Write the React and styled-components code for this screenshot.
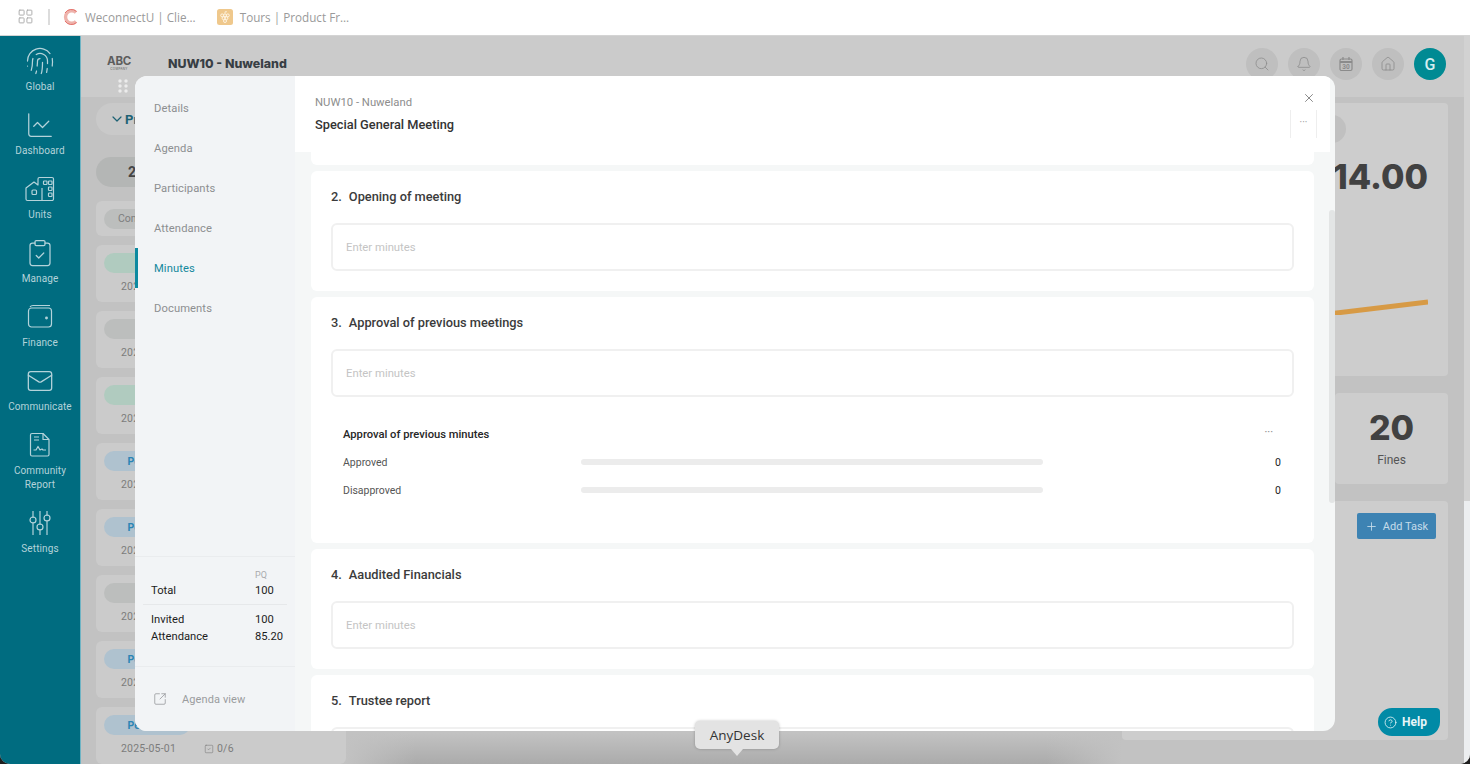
import React from 'react';
import styled, { createGlobalStyle } from 'styled-components';
import {
  Fingerprint, ChartLine, ClipboardCheck, Mail, X, Search, Bell, House,
  SquareArrowOutUpRight, Plus, CircleHelp, ChevronDown, LayoutGrid, SquareCheck,
} from 'lucide-react';

const GlobalStyle = createGlobalStyle`
  html, body { margin: 0; padding: 0; height: 100%; background: #1f1f1f; overflow: hidden; }
  body { font-family: Roboto, "Liberation Sans", sans-serif; }
  * { box-sizing: border-box; }
`;

const Page = styled.div`
  position: relative;
  width: 1470px;
  height: 764px;
  display: flex;
  flex-direction: column;
  overflow: hidden;
`;

/* browser bookmarks bar */
const TopBar = styled.div`
  height: 36px;
  flex: none;
  background: #fff;
  border-bottom: 1px solid #d4d4d4;
  display: flex;
  align-items: center;
  padding: 0 0 2px 17px;
  color: #9a9a9a;
  font-family: "Open Sans", sans-serif;
  font-size: 11.7px;
`;

const Divider = styled.span`
  width: 2px;
  height: 16px;
  background: #dcdcdc;
  margin: 0 13px 0 14px;
`;

const Tab = styled.div`
  display: flex;
  align-items: center;
  gap: 7px;
  margin-right: 21px;
  white-space: nowrap;
`;

const Window = styled.div`
  flex: 1;
  display: flex;
  min-height: 0;
  border-radius: 0 0 10px 10px;
  overflow: hidden;
  background: #c2c2c2;
`;

const Sidebar = styled.nav`
  width: 81px;
  flex: none;
  background: #006c80;
  border-right: 1px solid #6fb4c4;
  display: flex;
  flex-direction: column;
  padding-top: 10px;
`;

const SideItem = styled.div`
  height: ${(p) => (p.$tall ? '78px' : '64px')};
  display: flex;
  flex-direction: column;
  align-items: center;
  color: #b4d3da;
  font-size: 10px;
  line-height: 14px;
  text-align: center;
  letter-spacing: 0.1px;
`;

const IconSlot = styled.div`
  height: 30px;
  flex: none;
  margin-bottom: 4px;
  display: flex;
  align-items: center;
`;

const Main = styled.main`
  flex: 1;
  min-width: 0;
  display: flex;
  flex-direction: column;
`;

const Header = styled.header`
  height: 61px;
  flex: none;
  background: #cbcbcb;
  display: flex;
  align-items: center;
  padding: 0 18px 7px 26px;
`;

const Logo = styled.div`
  width: 24px;
  margin-right: 37px;
  color: #5d5d5d;
  font-family: Inter, sans-serif;
  font-weight: 700;
  font-size: 11.5px;
  line-height: 11px;
  letter-spacing: -0.3px;
  text-align: center;

  small {
    display: block;
    font-size: 3px;
    line-height: 4px;
    letter-spacing: 0.3px;
    font-weight: 400;
  }
`;

const OrgName = styled.div`
  flex: 1;
  font-family: Inter, sans-serif;
  font-weight: 800;
  font-size: 12.4px;
  color: #383e44;
`;

const HeaderButtons = styled.div`
  display: flex;
  gap: 10px;
  margin-top: 2px;
`;

const RoundButton = styled.div`
  width: 32px;
  height: 32px;
  border-radius: 50%;
  background: ${(p) => (p.$active ? '#008a93' : '#bfbfbf')};
  color: ${(p) => (p.$active ? '#d5eef0' : '#8b8b8b')};
  display: flex;
  align-items: center;
  justify-content: center;
  font-size: 16px;
  font-weight: 500;
`;

const Content = styled.div`
  flex: 1;
  min-height: 0;
  display: flex;
  padding: 6px 16px 0 15px;
  background: #c2c2c2;
`;

const LeftColumn = styled.div`
  width: 250px;
  flex: none;
  display: flex;
  flex-direction: column;
  gap: 9px;
`;

const CollapseBar = styled.div`
  height: 32px;
  border-radius: 16px;
  background: #c9c9c9;
  display: flex;
  align-items: center;
  padding-left: 13px;
  margin-bottom: 13px;
  color: #1d6274;
  font-size: 13px;
  font-weight: 700;
`;

const YearPill = styled.div`
  height: 30px;
  border-radius: 15px;
  background: #b4b6b5;
  color: #444;
  font-weight: 700;
  font-size: 14px;
  display: flex;
  align-items: center;
  padding-left: 32px;
  margin-bottom: 5px;
`;

const FilterCard = styled.div`
  height: 35px;
  border-radius: 6px;
  background: #cbcbcb;
  display: flex;
  align-items: center;
  padding-left: 8px;
`;

const StatusPill = styled.div`
  width: 86px;
  height: 20px;
  border-radius: 10px;
  background: ${(p) => p.$bg};
  color: ${(p) => p.$color};
  font-size: 10.5px;
  font-weight: 700;
  display: flex;
  align-items: center;
  justify-content: center;
`;

const FilterPill = styled.div`
  width: 70px;
  height: 20px;
  border-radius: 10px;
  background: #bcbebd;
  color: #7d7d7d;
  font-size: 10.5px;
  display: flex;
  align-items: center;
  padding-left: 14px;
`;

const MeetingCard = styled.div`
  height: 57px;
  flex: none;
  border-radius: 6px;
  background: #cbcbcb;
  padding: 8px 8px 0;
`;

const MeetingMeta = styled.div`
  display: flex;
  align-items: center;
  gap: 3px;
  margin: 7px 0 0 17px;
  color: #7c7c7c;
  font-size: 10.5px;
  letter-spacing: 0.2px;

  span:first-child { margin-right: 25px; }
`;

const CenterColumn = styled.div`
  flex: 1;
  min-width: 0;
  margin-bottom: -1px;
  background:
    linear-gradient(to right, #c2c2c2 0, rgba(194, 194, 194, 0) 70px, rgba(194, 194, 194, 0) 700px, #c2c2c2 776px),
    linear-gradient(#c2c2c2 0 630px, #ababab 661px);
`;

const RightColumn = styled.div`
  width: 326px;
  flex: none;
  display: flex;
  flex-direction: column;
  gap: 17px;
`;

const BalanceCard = styled.div`
  height: 273px;
  border-radius: 4px;
  background: #cdcdcd;
  display: flex;
  flex-direction: column;
  align-items: flex-end;
  padding: 12px 20px 0 0;
`;

const BadgeDot = styled.div`
  width: 28px;
  height: 28px;
  border-radius: 50%;
  background: #c0c0c0;
  margin-right: 82px;
`;

const BigNumber = styled.div`
  font-family: Inter, sans-serif;
  font-weight: 800;
  font-size: 34px;
  line-height: 40px;
  color: #414141;
  white-space: nowrap;
  text-align: center;
`;

const Balance = styled(BigNumber)`
  margin-top: 14px;
`;

const TrendLine = styled.svg`
  display: block;
  margin: 102px 0 0 0;
`;

const StatRow = styled.div`
  display: flex;
  justify-content: flex-end;
`;

const StatCard = styled.div`
  width: 113px;
  height: 91px;
  border-radius: 4px;
  background: #cdcdcd;
  display: flex;
  flex-direction: column;
  align-items: center;
  padding-top: 15px;
  color: #555;
  font-size: 12px;
`;

const StatLabel = styled.div`
  margin-top: 5px;
`;

const TaskCard = styled.div`
  height: 239px;
  flex: none;
  border-radius: 4px;
  background: #cdcdcd;
  display: flex;
  justify-content: flex-end;
  padding: 12px 12px 0 0;
`;

const AddTask = styled.div`
  width: 79px;
  height: 26px;
  border-radius: 2px;
  background: #3d83b3;
  color: #c5dcea;
  font-size: 11px;
  display: flex;
  align-items: center;
  justify-content: center;
  gap: 5px;
`;

const PageScroll = styled.div`
  width: 6px;
  flex: none;
  background: linear-gradient(#d2d2d2 0 465px, #eceef0 465px);
`;

const DragDots = styled.svg`
  position: absolute;
  left: 118px;
  top: 79px;
`;

const Modal = styled.section`
  position: absolute;
  left: 135px;
  top: 76px;
  width: 1200px;
  height: 655px;
  border-radius: 12px;
  background: #f5f7f7;
  overflow: hidden;
  display: flex;
`;

const ModalNav = styled.div`
  width: 160px;
  flex: none;
  background: #f2f4f6;
  display: flex;
  flex-direction: column;
  padding-top: 12px;
`;

const NavItem = styled.div`
  height: 40px;
  display: flex;
  align-items: center;
  padding-left: ${(p) => (p.$active ? '16px' : '19px')};
  border-left: ${(p) => (p.$active ? '3px solid #0d8aa0' : 'none')};
  color: ${(p) => (p.$active ? '#14889d' : '#8d8f91')};
  font-size: 11.2px;
  letter-spacing: 0.1px;
`;

const NavFooter = styled.div`
  margin-top: auto;
  border-top: 1px solid #eaecee;
  padding: 13px 8px 0;
  height: 110px;
  color: #1d1d1d;
  font-size: 11.2px;
`;

const PqLabel = styled.div`
  font-size: 9px;
  line-height: 11px;
  color: #a9abad;
  padding-left: 112px;
  margin-bottom: 1px;
`;

const TotalsRow = styled.div`
  display: grid;
  grid-template-columns: 104px 1fr;
  padding-left: 8px;
  line-height: 17px;
`;

const TotalsTop = styled(TotalsRow)`
  border-bottom: 1px solid #e6e8ea;
  padding-bottom: 5px;
  margin-bottom: 6px;
`;

const AgendaLink = styled.div`
  height: 65px;
  flex: none;
  border-top: 1px solid #eaecee;
  display: flex;
  align-items: center;
  gap: 15px;
  padding: 0 0 0 18px;
  color: #9a9c9e;
  font-size: 11px;
  letter-spacing: 0.1px;
`;

const ModalBody = styled.div`
  position: relative;
  flex: 1;
  min-width: 0;
  display: flex;
  flex-direction: column;
`;

const ModalHeader = styled.div`
  height: 76px;
  flex: none;
  margin-right: 5px;
  background: #fff;
  display: flex;
  justify-content: space-between;
  padding: 20px 13px 0 20px;
`;

const Breadcrumb = styled.div`
  color: #8d8d8d;
  font-size: 11.3px;
  line-height: 13px;
`;

const MeetingTitle = styled.div`
  margin-top: 7px;
  color: #333;
  font-size: 12.8px;
  font-weight: 500;
  line-height: 17px;
`;

const HeaderTools = styled.div`
  margin-top: -5px;
  width: 27px;
  display: flex;
  flex-direction: column;
  align-items: center;
  color: #7a7a7a;

  svg { margin-left: 10px; }
`;

const MoreBox = styled.div`
  width: 27px;
  height: 28px;
  margin-top: 5px;
  border-left: 1px solid #eeeeee;
  border-right: 1px solid #eeeeee;
  color: #999;
  font-size: 10px;
  line-height: 26px;
  text-align: center;
`;

const Scroller = styled.div`
  flex: 1;
  min-height: 0;
  overflow: hidden;
  padding: 0 21px 0 16px;
  display: flex;
  flex-direction: column;
  gap: 6px;
`;

const ScrollThumb = styled.div`
  position: absolute;
  right: 0;
  top: 134px;
  width: 6px;
  height: 293px;
  border-radius: 3px;
  background: #e3e5e5;
`;

const StubCard = styled.div`
  height: 13px;
  flex: none;
  background: #fff;
  border-radius: 0 0 6px 6px;
`;

const AgendaCard = styled.div`
  flex: none;
  background: #fff;
  border-radius: 6px;
  padding: 17px 20px 20px;
`;

const AgendaTitle = styled.h3`
  margin: 0 0 18px;
  display: flex;
  gap: 7px;
  color: #3b3b3b;
  font-size: 12.8px;
  line-height: 17px;
  font-weight: 500;
`;

const MinutesInput = styled.input`
  display: block;
  width: 963px;
  height: 48px;
  padding: 0 13px;
  border: 2px solid #f0f0f0;
  border-radius: 6px;
  background: #fff;
  outline: none;
  font-family: inherit;
  font-size: 11.3px;

  &::placeholder { color: #c4c4c4; opacity: 1; }
`;

const Poll = styled.div`
  padding: 29px 12px 19px 12px;
  width: 962px;
`;

const PollHead = styled.div`
  display: flex;
  justify-content: space-between;
  color: #262626;
  font-size: 11.2px;
  font-weight: 500;
  line-height: 17px;
  margin-bottom: 5px;
`;

const PollDots = styled.span`
  margin: -3px 8px 0 0;
  color: #999;
  font-size: 10px;
`;

const PollRow = styled.div`
  height: 28px;
  display: grid;
  grid-template-columns: 238px 462px 1fr;
  align-items: center;
  color: #555;
  font-size: 10.5px;
`;

const PollTrack = styled.div`
  height: 6px;
  border-radius: 3px;
  background: #ececec;
`;

const PollValue = styled.div`
  text-align: right;
  color: #222;
`;

const HelpButton = styled.div`
  position: absolute;
  left: 1378px;
  top: 708px;
  width: 62px;
  height: 28px;
  border-radius: 14px 4px 14px 14px;
  background: #018aa6;
  color: #e8f5f8;
  font-size: 12px;
  font-weight: 700;
  display: flex;
  align-items: center;
  gap: 5px;
  padding-left: 6px;
`;

const Tooltip = styled.div`
  position: absolute;
  left: 695px;
  top: 721px;
  width: 84px;
  height: 28px;
  border-radius: 5px;
  background: #e3e3e3;
  box-shadow: 0 0 3px rgba(0, 0, 0, 0.25);
  color: #333;
  font-family: "Open Sans", sans-serif;
  font-size: 13.5px;
  display: flex;
  align-items: center;
  justify-content: center;

  &::after {
    content: '';
    position: absolute;
    left: 36px;
    bottom: -7px;
    border-left: 6px solid transparent;
    border-right: 6px solid transparent;
    border-top: 7px solid #e3e3e3;
  }
`;

const UnitsIcon = () => (
  <svg width="32" height="26" viewBox="0 0 32 26" fill="none" stroke="currentColor" strokeWidth="1.2" strokeLinejoin="round">
    <path d="M2 12 L10 6 L14 9 V3 a1.5 1.5 0 0 1 1.5 -1.5 H28 a1.5 1.5 0 0 1 1.5 1.5 V23 a1.5 1.5 0 0 1 -1.5 1.5 H3.5 A1.5 1.5 0 0 1 2 23 Z" />
    <path d="M18 12 V24" />
    <rect x="8" y="14" width="4.5" height="4.5" rx="1" />
    <rect x="19.5" y="5" width="3.5" height="3.5" rx="0.8" />
    <rect x="24.5" y="5" width="3.5" height="3.5" rx="0.8" />
    <rect x="24.5" y="11" width="3.5" height="3.5" rx="0.8" />
    <rect x="24.5" y="17" width="3.5" height="3.5" rx="0.8" />
  </svg>
);

const WalletIcon = () => (
  <svg width="26" height="26" viewBox="0 0 26 26" fill="none" stroke="currentColor" strokeWidth="1.2">
    <rect x="1.5" y="4" width="23" height="19" rx="3" />
    <path d="M3 3 Q4 1.5 6 1.5 H23" />
    <circle cx="19.5" cy="14" r="0.8" fill="currentColor" />
  </svg>
);

const ReportIcon = () => (
  <svg width="26" height="26" viewBox="0 0 26 26" fill="none" stroke="currentColor" strokeWidth="1.2" strokeLinejoin="round">
    <path d="M5 1.5 H16 L22 7.5 V22.5 a1.5 1.5 0 0 1 -1.5 1.5 H5 a1.5 1.5 0 0 1 -1.5 -1.5 V3 A1.5 1.5 0 0 1 5 1.5 Z" />
    <path d="M16 1.5 V7.5 H22" />
    <path d="M7 5 H12 M7 8 H12" />
    <path d="M6.5 18 H9 L11 14.5 L13 18 L15 17 L16 18 H19" />
  </svg>
);

const SlidersIcon = () => (
  <svg width="26" height="26" viewBox="0 0 26 26" fill="none" stroke="currentColor" strokeWidth="1.2">
    <path d="M6 1 V8 M6 12 V25 M13 1 V15 M13 19 V25 M20 1 V6 M20 10 V25" />
    <circle cx="6" cy="10" r="3" />
    <circle cx="13" cy="17" r="3" />
    <circle cx="20" cy="8" r="3" />
  </svg>
);

const CalendarIcon = () => (
  <svg width="16" height="16" viewBox="0 0 16 16" fill="none" stroke="currentColor" strokeWidth="1.2">
    <rect x="2" y="3" width="12" height="11.5" rx="1.5" />
    <path d="M2 6 H14" strokeWidth="2" />
    <path d="M5 1 V4 M11 1 V4" />
    <text x="8" y="12.8" fontSize="6.5" textAnchor="middle" fill="currentColor" stroke="none" fontWeight="700">30</text>
  </svg>
);

const ConnectLogo = () => (
  <svg width="15" height="16" viewBox="0 0 15 16" fill="none">
    <path d="M13 3.5 A6.2 6.2 0 1 0 13 12.5" stroke="#eeb3ac" strokeWidth="3.4" />
    <path d="M13.5 2.5 A7.5 7.5 0 0 0 2 4" stroke="#e4706a" strokeWidth="1" />
    <path d="M13.5 13.5 A7.5 7.5 0 0 1 2 12" stroke="#e4706a" strokeWidth="1" />
  </svg>
);

const ToursLogo = () => (
  <svg width="16" height="16" viewBox="0 0 16 16">
    <rect width="16" height="16" rx="2.5" fill="#efc88c" />
    <g fill="none" stroke="#fff6e6" strokeWidth="0.9">
      <circle cx="5.2" cy="6.4" r="1.5" />
      <circle cx="8" cy="6.4" r="1.5" />
      <circle cx="10.8" cy="6.4" r="1.5" />
      <circle cx="6.6" cy="9.2" r="1.5" />
      <circle cx="9.4" cy="9.2" r="1.5" />
      <circle cx="8" cy="12" r="1.5" />
    </g>
    <path d="M8 4.5 V2.8 H10" stroke="#fff6e6" strokeWidth="0.8" fill="none" />
  </svg>
);

const sideItems = [
  { label: 'Global', icon: <Fingerprint size={30} strokeWidth={1} /> },
  { label: 'Dashboard', icon: <ChartLine size={30} strokeWidth={1} /> },
  { label: 'Units', icon: <UnitsIcon /> },
  { label: 'Manage', icon: <ClipboardCheck size={30} strokeWidth={1} /> },
  { label: 'Finance', icon: <WalletIcon /> },
  { label: 'Communicate', icon: <Mail size={28} strokeWidth={1.1} /> },
  { label: <>Community<br />Report</>, icon: <ReportIcon />, tall: true },
  { label: 'Settings', icon: <SlidersIcon /> },
];

const meetings = [
  { bg: '#b0cbbf', color: '#3d8a68', text: '' },
  { bg: '#bcbebd', color: '#666', text: '' },
  { bg: '#b0cbbf', color: '#3d8a68', text: '' },
  { bg: '#afc2cf', color: '#2b85b5', text: 'Pending' },
  { bg: '#afc2cf', color: '#2b85b5', text: 'Pending' },
  { bg: '#bcbebd', color: '#666', text: '' },
  { bg: '#afc2cf', color: '#2b85b5', text: 'Pending' },
  { bg: '#afc2cf', color: '#2b85b5', text: 'Pending' },
];

const navItems = ['Details', 'Agenda', 'Participants', 'Attendance', 'Minutes', 'Documents'];

const App = () => (
  <Page>
    <GlobalStyle />
    <TopBar>
      <LayoutGrid size={17} strokeWidth={1.3} color="#a8a8a8" />
      <Divider />
      <Tab><ConnectLogo />WeconnectU | Clie...</Tab>
      <Tab><ToursLogo />Tours | Product Fr...</Tab>
    </TopBar>
    <Window>
      <Sidebar>
        {sideItems.map((item, index) => (
          <SideItem key={index} $tall={item.tall}>
            <IconSlot>{item.icon}</IconSlot>
            <div>{item.label}</div>
          </SideItem>
        ))}
      </Sidebar>
      <Main>
        <Header>
          <Logo>ABC<small>COMPANY</small></Logo>
          <OrgName>NUW10 - Nuweland</OrgName>
          <HeaderButtons>
            <RoundButton><Search size={16} strokeWidth={1.2} /></RoundButton>
            <RoundButton><Bell size={16} strokeWidth={1.2} /></RoundButton>
            <RoundButton><CalendarIcon /></RoundButton>
            <RoundButton><House size={16} strokeWidth={1.2} /></RoundButton>
            <RoundButton $active>G</RoundButton>
          </HeaderButtons>
        </Header>
        <Content>
          <LeftColumn>
            <CollapseBar><ChevronDown size={16} strokeWidth={1.8} />Previous</CollapseBar>
            <YearPill>2025</YearPill>
            <FilterCard>
              <FilterPill>Completed</FilterPill>
            </FilterCard>
            {meetings.map((m, index) => (
              <MeetingCard key={index}>
                <StatusPill $bg={m.bg} $color={m.color}>{m.text}</StatusPill>
                <MeetingMeta>
                  <span>2025-05-01</span>
                  <SquareCheck size={10} strokeWidth={1.4} />
                  <span>0/6</span>
                </MeetingMeta>
              </MeetingCard>
            ))}
          </LeftColumn>
          <CenterColumn />
          <RightColumn>
            <BalanceCard>
              <BadgeDot />
              <Balance>R 1,314.00</Balance>
              <TrendLine width="100" height="16" viewBox="0 0 100 16">
                <path d="M0 15 L100 3" stroke="#d79a45" strokeWidth="5" fill="none" />
              </TrendLine>
            </BalanceCard>
            <StatRow>
              <StatCard>
                <BigNumber>20</BigNumber>
                <StatLabel>Fines</StatLabel>
              </StatCard>
            </StatRow>
            <TaskCard>
              <AddTask><Plus size={13} strokeWidth={1.6} />Add Task</AddTask>
            </TaskCard>
          </RightColumn>
        </Content>
      </Main>
      <PageScroll />
    </Window>

    <DragDots width="10" height="14" viewBox="0 0 10 14" fill="#ececec">
      <circle cx="2" cy="2" r="1.7" /><circle cx="8" cy="2" r="1.7" />
      <circle cx="2" cy="7" r="1.7" /><circle cx="8" cy="7" r="1.7" />
      <circle cx="2" cy="12" r="1.7" /><circle cx="8" cy="12" r="1.7" />
    </DragDots>

    <Modal>
      <ModalNav>
        {navItems.map((name) => (
          <NavItem key={name} $active={name === 'Minutes'}>{name}</NavItem>
        ))}
        <NavFooter>
          <PqLabel>PQ</PqLabel>
          <TotalsTop><span>Total</span><span>100</span></TotalsTop>
          <TotalsRow><span>Invited</span><span>100</span></TotalsRow>
          <TotalsRow><span>Attendance</span><span>85.20</span></TotalsRow>
        </NavFooter>
        <AgendaLink>
          <SquareArrowOutUpRight size={14} strokeWidth={1.4} />
          Agenda view
        </AgendaLink>
      </ModalNav>
      <ModalBody>
        <ModalHeader>
          <div>
            <Breadcrumb>NUW10 - Nuweland</Breadcrumb>
            <MeetingTitle>Special General Meeting</MeetingTitle>
          </div>
          <HeaderTools>
            <X size={14} strokeWidth={1.5} />
            <MoreBox>···</MoreBox>
          </HeaderTools>
        </ModalHeader>
        <Scroller>
          <StubCard />
          <AgendaCard>
            <AgendaTitle><span>2.</span><span>Opening of meeting</span></AgendaTitle>
            <MinutesInput placeholder="Enter minutes" />
          </AgendaCard>
          <AgendaCard>
            <AgendaTitle><span>3.</span><span>Approval of previous meetings</span></AgendaTitle>
            <MinutesInput placeholder="Enter minutes" />
            <Poll>
              <PollHead><span>Approval of previous minutes</span><PollDots>···</PollDots></PollHead>
              <PollRow><span>Approved</span><PollTrack /><PollValue>0</PollValue></PollRow>
              <PollRow><span>Disapproved</span><PollTrack /><PollValue>0</PollValue></PollRow>
            </Poll>
          </AgendaCard>
          <AgendaCard>
            <AgendaTitle><span>4.</span><span>Aaudited Financials</span></AgendaTitle>
            <MinutesInput placeholder="Enter minutes" />
          </AgendaCard>
          <AgendaCard>
            <AgendaTitle><span>5.</span><span>Trustee report</span></AgendaTitle>
            <MinutesInput placeholder="Enter minutes" />
          </AgendaCard>
        </Scroller>
        <ScrollThumb />
      </ModalBody>
    </Modal>

    <HelpButton><CircleHelp size={13} strokeWidth={1.5} />Help</HelpButton>
    <Tooltip>AnyDesk</Tooltip>
  </Page>
);

export default App;
